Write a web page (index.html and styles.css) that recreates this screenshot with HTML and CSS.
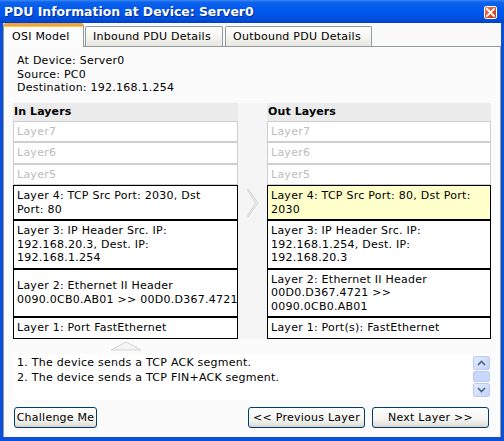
FILE: index.html
```html
<!DOCTYPE html>
<html>
<head>
<meta charset="utf-8">
<link rel="stylesheet" href="styles.css">
</head>
<body>
<div class="window">
  <div class="titlebar">
    <span class="title">PDU Information at Device: Server0</span>
    <span class="close"><svg width="9" height="9" viewBox="0 0 9 9"><path d="M1 1L8 8M8 1L1 8" stroke="#fff" stroke-width="1.8" stroke-linecap="square"/></svg></span>
  </div>
  <div class="client">
    <div class="tabs">
      <div class="tab active">OSI Model</div>
      <div class="tab">Inbound PDU Details</div>
      <div class="tab">Outbound PDU Details</div>
    </div>
    <div class="panel">
      <div class="info">
        <div>At Device: Server0</div>
        <div>Source: PC0</div>
        <div>Destination: 192.168.1.254</div>
      </div>
      <div class="layers">
        <div class="hdr">In Layers</div><div class="mid"></div><div class="hdr">Out Layers</div>

        <div class="box dim">Layer7</div><div class="mid"></div><div class="box dim">Layer7</div>
        <div class="box dim">Layer6</div><div class="mid"></div><div class="box dim">Layer6</div>
        <div class="box dim">Layer5</div><div class="mid"></div><div class="box dim">Layer5</div>

        <div class="box">Layer 4: TCP Src Port: 2030, Dst<br>Port: 80</div>
        <div class="mid arrow"><svg width="12" height="30" viewBox="0 0 12 30"><polygon points="1,1 11,15 1,29 1,27 8.5,15 1,3" fill="#ececec" stroke="#d6d6d6" stroke-width="1"/></svg></div>
        <div class="box hl">Layer 4: TCP Src Port: 80, Dst Port:<br>2030</div>

        <div class="box">Layer 3: IP Header Src. IP:<br>192.168.20.3, Dest. IP:<br>192.168.1.254</div><div class="mid"></div><div class="box">Layer 3: IP Header Src. IP:<br>192.168.1.254, Dest. IP:<br>192.168.20.3</div>

        <div class="box">Layer 2: Ethernet II Header<br>0090.0CB0.AB01 &gt;&gt; 00D0.D367.4721</div><div class="mid"></div><div class="box">Layer 2: Ethernet II Header<br>00D0.D367.4721 &gt;&gt;<br>0090.0CB0.AB01</div>

        <div class="box">Layer 1: Port FastEthernet</div><div class="mid"></div><div class="box">Layer 1: Port(s): FastEthernet</div>
      </div>
      <div class="uprow"><svg width="32" height="10" viewBox="0 0 32 10"><polygon points="1,9 16,1 31,9" fill="#f4f4f4" stroke="#d4d4d4" stroke-width="1"/></svg></div>
      <div class="log">
        <div class="logtext">
          <div>1. The device sends a TCP ACK segment.</div>
          <div>2. The device sends a TCP FIN+ACK segment.</div>
        </div>
        <div class="scroll">
          <div class="sbtn"><svg width="9" height="6" viewBox="0 0 9 6"><path d="M1 5L4.5 1.5L8 5" fill="none" stroke="#4d6185" stroke-width="1.6"/></svg></div>
          <div class="thumb"></div>
          <div class="sbtn"><svg width="9" height="6" viewBox="0 0 9 6"><path d="M1 1L4.5 4.5L8 1" fill="none" stroke="#4d6185" stroke-width="1.6"/></svg></div>
        </div>
      </div>
      <div class="buttons">
        <div class="btn challenge">Challenge Me</div>
        <div class="spacer"></div>
        <div class="btn nav">&lt;&lt; Previous Layer</div>
        <div class="btn nav">Next Layer &gt;&gt;</div>
      </div>
    </div>
  </div>
</div>
</body>
</html>
```

FILE: styles.css
```css
html, body {
  margin: 0;
  padding: 0;
}
body {
  width: 504px;
  height: 441px;
  overflow: hidden;
  font-family: "DejaVu Sans", Verdana, sans-serif;
  font-size: 11px;
  letter-spacing: 0.25px;
  color: #000;
}
.window {
  width: 504px;
  height: 441px;
  box-sizing: border-box;
  background: #0b4fdc;
  padding: 0 3px 4px 3px;
  display: flex;
  flex-direction: column;
}
.titlebar {
  height: 23px;
  margin: 0 -3px;
  padding: 0 7px 0 4px;
  display: flex;
  align-items: center;
  justify-content: space-between;
  background: linear-gradient(#3a8cf8 0, #0f64ec 2px, #0058ee 9px, #0054e6 16px, #0049d6 21px, #003fc0 23px);
}
.title {
  color: #fff;
  font-weight: bold;
  font-size: 12.4px;
  letter-spacing: 0;
  text-shadow: 1px 1px 0 #0a2c8a;
  margin-top: -1px;
}
.close {
  width: 13px;
  height: 13px;
  box-sizing: border-box;
  border: 1px solid #fff;
  border-radius: 2px;
  background: linear-gradient(135deg, #f08a6a 0%, #e0512c 50%, #c8381a 100%);
  display: flex;
  align-items: center;
  justify-content: center;
  margin-top: 2px;
}
.client {
  flex: 1;
  background: #f9f9f9;
  display: flex;
  flex-direction: column;
}
.tabs {
  display: flex;
  align-items: flex-end;
  height: 24px;
  margin-bottom: -1px;
  position: relative;
  z-index: 1;
}
.tab {
  height: 20px;
  box-sizing: border-box;
  border: 1px solid #919b9c;
  border-bottom: none;
  border-radius: 2px 2px 0 0;
  background: linear-gradient(#ffffff, #f3f3ef 60%, #e7e6e0);
  padding: 3px 0 0 7px;
  margin-right: 2px;
  margin-bottom: 1px;
  white-space: nowrap;
}
.tab:nth-child(2) { width: 138px; }
.tab:nth-child(3) { width: 147px; }
.tab.active {
  height: 24px;
  width: 81px;
  margin-right: 1px;
  margin-bottom: 0;
  background: #fcfcfe;
  border-top: 3px solid #f0a23c;
  border-radius: 3px 3px 0 0;
  padding-top: 4px;
  padding-left: 8px;
  box-shadow: inset 0 1px 0 #ffc83c;
}
.panel {
  flex: 1;
  border: 1px solid #919b9c;
  border-bottom: none;
  background: #fbfbfc;
  padding: 7px 0 0 9px;
  display: flex;
  flex-direction: column;
}
.info {
  line-height: 13.5px;
  padding-left: 4px;
}
.layers {
  margin-top: 8px;
  display: grid;
  grid-template-columns: 225px 29px 224px;
  grid-auto-rows: auto;
}
.hdr {
  background: #ebebeb;
  font-weight: bold;
  height: 18px;
  line-height: 18px;
  padding-left: 1px;
  letter-spacing: 0.1px;
}
.mid {
  background: #f5f5f5;
}
.arrow {
  display: flex;
  align-items: center;
  padding-left: 9px;
}
.box {
  background: #fff;
  border: 1px solid #000;
  padding: 3px 3px;
  line-height: 13.5px;
  white-space: nowrap;
  display: flex;
  align-items: center;
  overflow: hidden;
}
.box.dim {
  border-color: #cfcfcf;
  color: #bcbcbc;
}
.box.hl {
  background: #ffffcc;
}
.uprow {
  height: 15px;
  padding-left: 97px;
  display: flex;
  align-items: center;
}
.log {
  width: 478px;
  height: 45px;
  box-sizing: border-box;
  background: #fff;
  display: flex;
}
.logtext {
  flex: 1;
  padding: 1px 4px;
  line-height: 15.5px;
}
.scroll {
  width: 17px;
  margin: 2px 1px 2px 0;
  display: flex;
  flex-direction: column;
  gap: 1px;
}
.sbtn {
  height: 14px;
  box-sizing: border-box;
  border: 1px solid #b9cbf3;
  border-radius: 2px;
  background: linear-gradient(135deg, #e3ecfd, #c2d4fb);
  display: flex;
  align-items: center;
  justify-content: center;
}
.thumb {
  flex: 1;
  border: 1px solid #b9cbf3;
  border-radius: 2px;
  background: #c8d7fb;
}
.buttons {
  display: flex;
  margin-top: 8px;
  gap: 7px;
  padding-left: 1px;
  width: 475px;
}
.spacer { flex: 1; }
.btn {
  height: 21px;
  box-sizing: border-box;
  border: 1px solid #003c74;
  border-radius: 3px;
  background: linear-gradient(#ffffff, #f4f4f0 60%, #e3e1da 90%, #d6d0c5);
  display: flex;
  align-items: center;
  justify-content: center;
  white-space: nowrap;
  flex: none;
}
.challenge { width: 83px; }
.nav { width: 117px; }
```
